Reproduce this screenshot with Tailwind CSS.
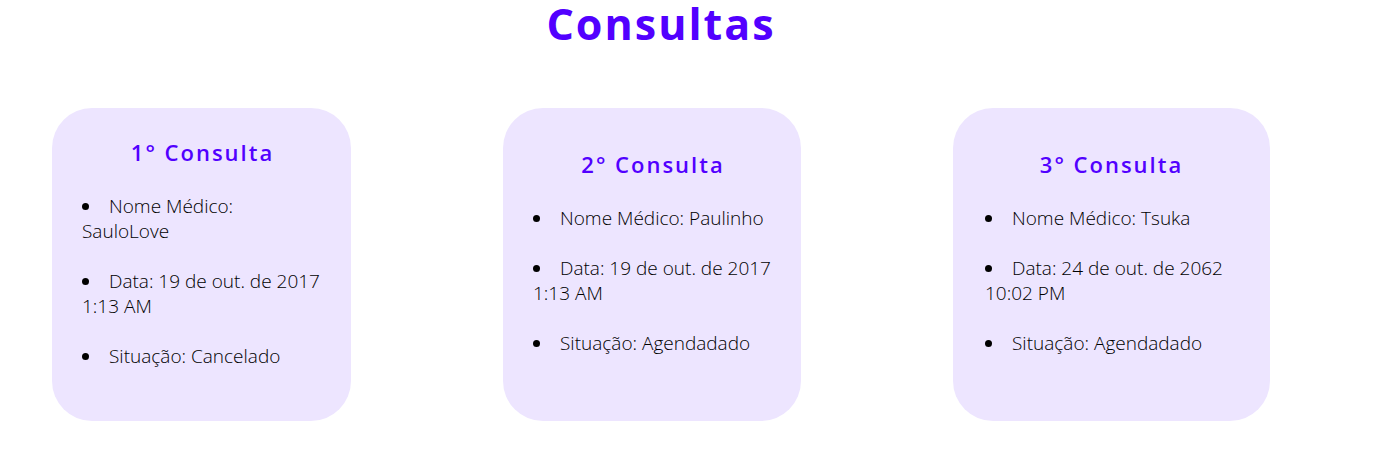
<!DOCTYPE html>
<html lang="pt-BR">
<head>
<meta charset="utf-8">
<title>Consultas</title>
<script src="https://cdn.jsdelivr.net/npm/@tailwindcss/browser@4"></script>
</head>
<body class="bg-white font-['Open_Sans','Noto_Sans',sans-serif] text-black">
<main class="pr-[125px] pl-[52px]">
<h1 class="text-center text-[43px] leading-[48px] font-bold tracking-[2px] text-[#5200ff]">Consultas</h1>
<div class="mt-[60px] flex items-stretch justify-between gap-4">
<section class="flex min-h-[313px] w-[299px] flex-col justify-center rounded-[40px] bg-[#ede5ff] pr-7 pl-[30px]">
<h2 class="text-center text-[22px] leading-[30px] font-semibold tracking-[2px] text-[#5200ff]">1° Consulta</h2>
<ul class="mt-[27px] mb-6 list-inside list-disc space-y-[25px] text-[19px] leading-[25px] font-light">
<li>Nome Médico: SauloLove</li>
<li>Data: 19 de out. de 2017 1:13 AM</li>
<li>Situação: Cancelado</li>
</ul>
</section>
<section class="flex min-h-[313px] w-[298px] flex-col justify-center rounded-[40px] bg-[#ede5ff] pr-7 pl-[30px]">
<h2 class="text-center text-[22px] leading-[30px] font-semibold tracking-[2px] text-[#5200ff]">2° Consulta</h2>
<ul class="mt-[27px] mb-6 list-inside list-disc space-y-[25px] text-[19px] leading-[25px] font-light">
<li>Nome Médico: Paulinho</li>
<li>Data: 19 de out. de 2017 1:13 AM</li>
<li>Situação: Agendadado</li>
</ul>
</section>
<section class="flex min-h-[313px] w-[317px] flex-col justify-center rounded-[40px] bg-[#ede5ff] px-8">
<h2 class="text-center text-[22px] leading-[30px] font-semibold tracking-[2px] text-[#5200ff]">3° Consulta</h2>
<ul class="mt-[27px] mb-6 list-inside list-disc space-y-[25px] text-[19px] leading-[25px] font-light">
<li>Nome Médico: Tsuka</li>
<li>Data: 24 de out. de 2062 10:02 PM</li>
<li>Situação: Agendadado</li>
</ul>
</section>
</div>
</main>
</body>
</html>
